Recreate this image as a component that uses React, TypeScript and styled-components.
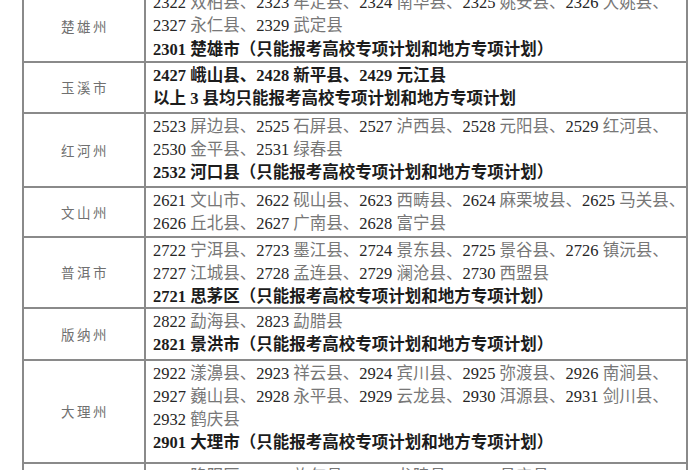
import React from "react";
import styled, { createGlobalStyle } from "styled-components";

const Global = createGlobalStyle`
  html, body { margin: 0; padding: 0; background: #ffffff; }
  body { overflow: hidden; width: 700px; height: 470px; }
`;

const Page = styled.div`
  width: 700px;
  height: 470px;
  overflow: hidden;
  background: #ffffff;
`;

const Table = styled.div`
  margin: -10px 0 0 22px;
  width: 666px;
  box-sizing: border-box;
  border-left: 2px solid #8a8a8a;
  border-right: 2px solid #8a8a8a;
  font-family: "Liberation Serif", "Noto Sans CJK SC", serif;
`;

const Row = styled.div<{ $h: number }>`
  display: grid;
  grid-template-columns: 122px 1fr;
  height: ${(p) => p.$h}px;
  box-sizing: border-box;
  border-bottom: 2px solid #8a8a8a;
`;

const Label = styled.div`
  display: flex;
  align-items: center;
  justify-content: center;
  border-right: 2px solid #8a8a8a;
  font-size: 13.5px;
  letter-spacing: 2.5px;
  color: #707070;
  padding-left: 2px;
`;

const Content = styled.div`
  padding: 1px 0 0 7px;
  font-size: 16.5px;
  line-height: 23.3px;
  white-space: nowrap;
  overflow: hidden;
`;

const Line = styled.div<{ $bold?: boolean }>`
  color: ${(p) => (p.$bold ? "#1c1c1c" : "#2a2a2a")};
  font-weight: ${(p) => (p.$bold ? 700 : 400)};
`;

const Code = styled.span`
  color: #262626;
`;

const Name = styled.span`
  color: #777777;
`;

type LineData = { t: string; b?: boolean };
type RowData = { label: string; h: number; lines: LineData[] };

const rows: RowData[] = [
  {
    label: "楚雄州",
    h: 73,
    lines: [
      { t: "2322 双柏县、2323 牟定县、2324 南华县、2325 姚安县、2326 大姚县、" },
      { t: "2327 永仁县、2329 武定县" },
      { t: "2301 楚雄市（只能报考高校专项计划和地方专项计划）", b: true },
    ],
  },
  {
    label: "玉溪市",
    h: 50.5,
    lines: [
      { t: "2427 峨山县、2428 新平县、2429 元江县", b: true },
      { t: "以上 3 县均只能报考高校专项计划和地方专项计划", b: true },
    ],
  },
  {
    label: "红河州",
    h: 74,
    lines: [
      { t: "2523 屏边县、2525 石屏县、2527 泸西县、2528 元阳县、2529 红河县、" },
      { t: "2530 金平县、2531 绿春县" },
      { t: "2532 河口县（只能报考高校专项计划和地方专项计划）", b: true },
    ],
  },
  {
    label: "文山州",
    h: 50,
    lines: [
      { t: "2621 文山市、2622 砚山县、2623 西畴县、2624 麻栗坡县、2625 马关县、" },
      { t: "2626 丘北县、2627 广南县、2628 富宁县" },
    ],
  },
  {
    label: "普洱市",
    h: 71,
    lines: [
      { t: "2722 宁洱县、2723 墨江县、2724 景东县、2725 景谷县、2726 镇沅县、" },
      { t: "2727 江城县、2728 孟连县、2729 澜沧县、2730 西盟县" },
      { t: "2721 思茅区（只能报考高校专项计划和地方专项计划）", b: true },
    ],
  },
  {
    label: "版纳州",
    h: 52,
    lines: [
      { t: "2822 勐海县、2823 勐腊县" },
      { t: "2821 景洪市（只能报考高校专项计划和地方专项计划）", b: true },
    ],
  },
  {
    label: "大理州",
    h: 103,
    lines: [
      { t: "2922 漾濞县、2923 祥云县、2924 宾川县、2925 弥渡县、2926 南涧县、" },
      { t: "2927 巍山县、2928 永平县、2929 云龙县、2930 洱源县、2931 剑川县、" },
      { t: "2932 鹤庆县" },
      { t: "2901 大理市（只能报考高校专项计划和地方专项计划）", b: true },
    ],
  },
  {
    label: "保山市",
    h: 60,
    lines: [{ t: "3001 隆阳区、3022 施甸县、3024 龙陵县、3025 昌宁县" }],
  },
];

function renderLine(l: LineData) {
  if (l.b) return l.t;
  return l.t
    .split(/(\d+)/)
    .filter((s) => s.length > 0)
    .map((s, i) => (/^\d+$/.test(s) ? <Code key={i}>{s}</Code> : <Name key={i}>{s}</Name>));
}

export default function App() {
  return (
    <Page>
      <Global />
      <Table>
        {rows.map((r) => (
          <Row key={r.label} $h={r.h}>
            <Label>{r.label}</Label>
            <Content>
              {r.lines.map((l, i) => (
                <Line key={i} $bold={l.b}>
                  {renderLine(l)}
                </Line>
              ))}
            </Content>
          </Row>
        ))}
      </Table>
    </Page>
  );
}
